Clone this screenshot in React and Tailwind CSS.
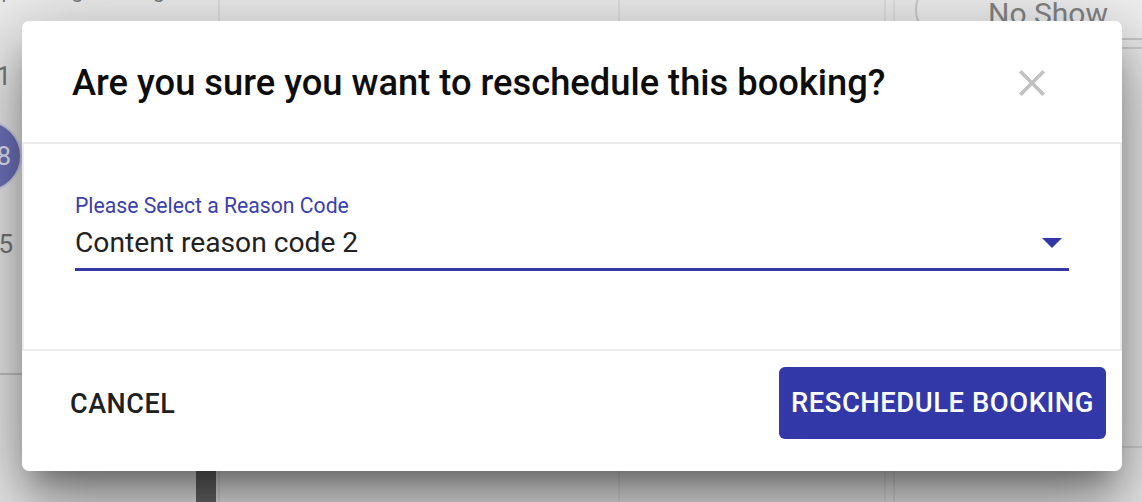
import React from "react";

function CloseIcon() {
  return (
    <svg width="26" height="26" viewBox="5 5 14 14" fill="#c2c2c2" aria-hidden="true">
      <path d="M19 6.41L17.59 5 12 10.59 6.41 5 5 6.41 10.59 12 5 17.59 6.41 19 12 13.41 17.59 19 19 17.59 13.41 12z" />
    </svg>
  );
}

function Background() {
  return (
    <div className="flex h-[502px] w-[1142px] overflow-hidden bg-[#efefef] text-[#7a7a7a]">
      {/* Column A */}
      <div className="flex w-[220px] shrink-0 flex-col border-r-2 border-[#e0e0e0]">
        <div className="ml-[-12px] mt-[-19px] whitespace-nowrap text-[21px] leading-none">Upcoming Booking</div>
        <div className="ml-[-50px] mt-[38px] flex flex-col text-[26px] leading-none">
          <div className="flex h-[72px] w-[72px] items-center justify-end pr-[11px]">1</div>
          <div className="mt-[8px] flex h-[72px] w-[72px] items-center justify-end rounded-full border-2 border-[#d7d9ef] bg-[#7377c2] pr-[9px] text-[#eceefa]">8</div>
          <div className="mt-[16px] flex h-[72px] w-[72px] items-center justify-end pr-[9px]">5</div>
        </div>
        <div className="mt-[93px] border-t-2 border-[#c9c9c9]" />
        <div className="flex-1" />
        <div className="mr-[2px] h-[60px] w-[20px] self-end bg-[#6a6a6a]" />
      </div>
      {/* Column B */}
      <div className="w-[400px] shrink-0 border-r-2 border-[#e2e2e2]" />
      {/* Column C */}
      <div className="w-[266px] shrink-0 border-r-2 border-[#e2e2e2]" />
      {/* Column D */}
      <div className="w-[9px] shrink-0 border-r-2 border-[#e2e2e2]" />
      {/* Column E */}
      <div className="flex flex-1 flex-col">
        <div className="ml-[20px] mt-[-20px] flex h-[60px] w-[270px] items-end justify-start rounded-full border-2 border-[#cdcdcd] bg-[#f2f2f2] pb-[9px] pl-[71px] text-[30px] leading-none text-[#858585]">
          No Show
        </div>
        <div className="mt-[7px] border-t-2 border-[#d2d2d2]" />
        <div className="mt-[397px] border-t-2 border-[#d8d8d8]" />
      </div>
    </div>
  );
}

export default function App() {
  return (
    <div className="relative h-[502px] w-[1142px] overflow-hidden font-['Roboto','Liberation_Sans',sans-serif]">
      <Background />
      <div className="absolute inset-0 pl-[22px] pt-[21px]">
        <div className="flex h-[450px] w-[1100px] flex-col rounded-[7px] bg-white shadow-[0_20px_27px_-13px_rgba(0,0,0,0.36),0_43px_68px_5px_rgba(0,0,0,0.25),0_16px_83px_14px_rgba(0,0,0,0.2)]">
          {/* Header */}
          <div className="flex h-[121px] items-center justify-between pl-[50px] pr-[77px] pt-[3px]">
            <h2 className="whitespace-nowrap text-[36.3px] font-medium leading-none text-[#0d0d0d]">
              Are you sure you want to reschedule this booking?
            </h2>
            <button className="flex items-center justify-center">
              <CloseIcon />
            </button>
          </div>
          {/* Content */}
          <div className="flex h-[209px] flex-col border-2 border-[#ececec] px-[51px] pt-[51px]">
            <label className="text-[21.2px] leading-none text-[#3a40ad]">Please Select a Reason Code</label>
            <div className="mt-[13px] flex items-center justify-between border-b-[3px] border-[#3338a9] pb-[11px] pr-[7px]">
              <span className="text-[28.2px] leading-none text-[#222222]">Content reason code 2</span>
              <svg width="20" height="10" viewBox="0 0 20 10" aria-hidden="true">
                <path d="M0 0 L20 0 L10 10 Z" fill="#3338a9" />
              </svg>
            </div>
          </div>
          {/* Footer */}
          <div className="flex flex-1 items-start justify-between pl-[36px] pr-[16px] pt-[16px]">
            <button className="flex h-[72px] items-center whitespace-nowrap px-[12px] pt-[2px] text-[27px] font-medium leading-none tracking-[0.02em] text-[#202020]">
              CANCEL
            </button>
            <button className="flex h-[72px] w-[327px] items-center justify-center whitespace-nowrap rounded-[6px] bg-[#3338a9] px-[8px] pt-[2px] text-[27.4px] font-medium leading-none tracking-[0.02em] text-white">
              RESCHEDULE BOOKING
            </button>
          </div>
        </div>
      </div>
    </div>
  );
}
